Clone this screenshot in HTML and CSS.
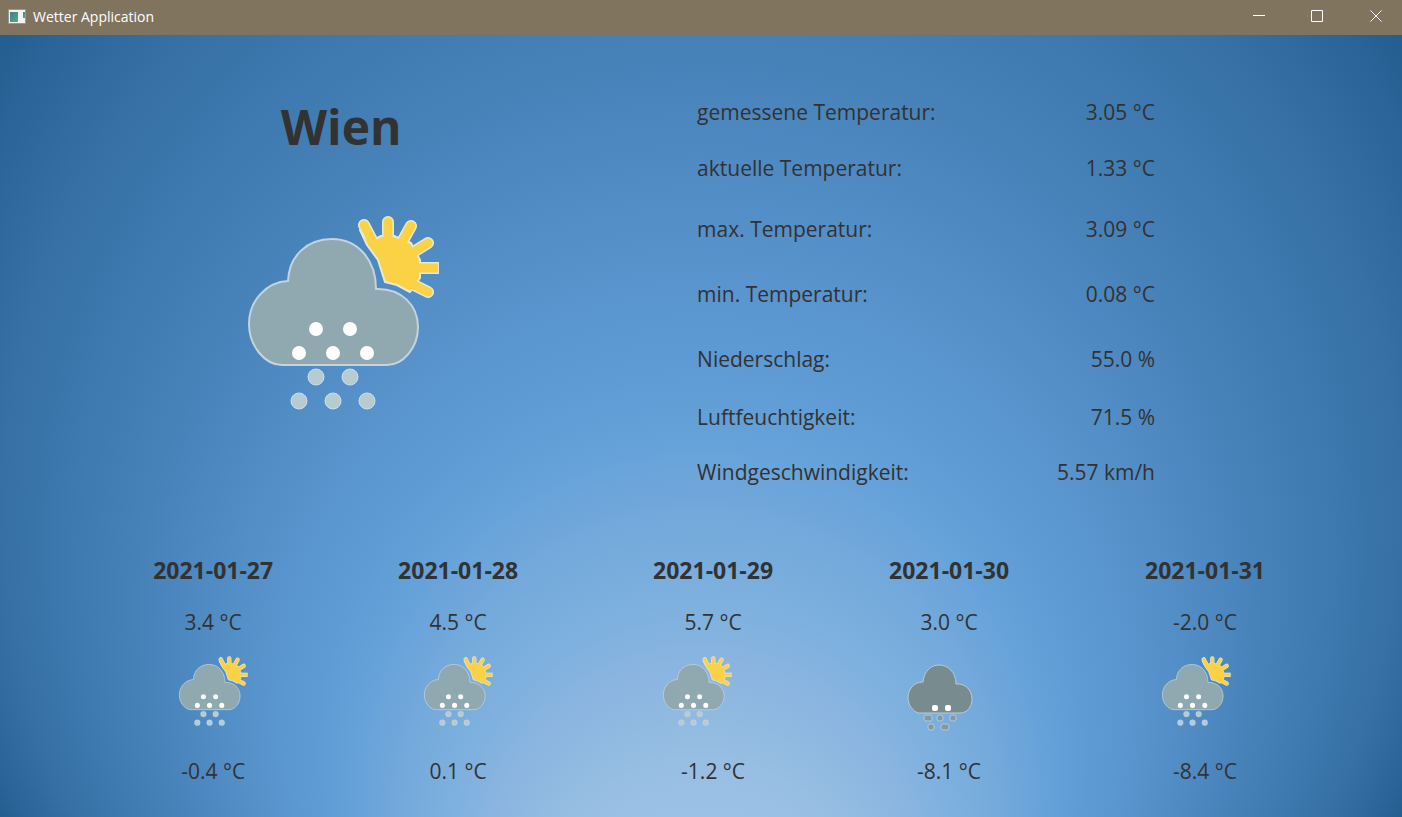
FILE: index.html
```html
<!DOCTYPE html>
<html lang="de">
<head>
<meta charset="utf-8">
<title>Wetter Application</title>
<link rel="stylesheet" href="styles.css">
</head>
<body>
<svg class="symbols" aria-hidden="true">
  <defs>
    <symbol id="snow-sun" viewBox="0 0 192 194">
      <g stroke-linecap="round" stroke-linejoin="round">
        <path d="M116 9L126 28M140 6V30M163 10L153 28M180 27L159 40M180 76L156 64" fill="none" stroke="#e6ebd6" stroke-width="12"/>
        <path d="M160 52H191" fill="none" stroke="#e6ebd6" stroke-width="12" stroke-linecap="butt"/>
        <path d="M112 14L119 29L130 44L137 66L149 69L162 76L172 62V44L163 27L146 20H133L122 26Z" fill="#fbd145" stroke="#e6ebd6" stroke-width="2"/>
        <path d="M116 9L126 28M140 6V30M163 10L153 28M180 27L159 40M180 76L156 64" fill="none" stroke="#fbd145" stroke-width="9"/>
        <path d="M160 52H190" fill="none" stroke="#fbd145" stroke-width="9" stroke-linecap="butt"/>
      </g>
      <path d="M34 149C17 149 1 130 1 108C1 84 19 66 40 65C41 40 59 23 84 23C109 23 128 43 128 73C153 72 170 89 170 111C170 132 155 149 139 149Z" fill="#90a9b1" stroke="#c4d4de" stroke-width="2"/>
      <g fill="#fff"><circle cx="68" cy="113" r="7"/><circle cx="102" cy="113" r="7"/><circle cx="51" cy="137" r="7"/><circle cx="85" cy="137" r="7"/><circle cx="119" cy="137" r="7"/></g>
      <g fill="#b7cbd3" stroke="#cfdee8" stroke-width="1"><circle cx="68" cy="161" r="8"/><circle cx="102" cy="161" r="8"/><circle cx="51" cy="185" r="8"/><circle cx="85" cy="185" r="8"/><circle cx="119" cy="185" r="8"/></g>
    </symbol>
    <symbol id="snow" viewBox="0 0 66 67">
      <path d="M11 49C6 47 1 41 1 34C1 25 7 18 16 18C17 7 24 1 32 1C41 1 49 8 49 20C58 19 65 26 65 35C65 43 60 49 53 49Z" fill="#788b8f" stroke="#bccbd2"/>
      <g fill="#fff"><rect x="25" y="41" width="6" height="6" rx="2"/><rect x="38" y="41" width="6" height="6" rx="2"/></g>
      <g fill="#8299a1" stroke="#b4c9d8"><rect x="17" y="51" width="8" height="6" rx="2"/><rect x="30" y="51" width="6" height="6" rx="2"/><rect x="43" y="51" width="6" height="6" rx="2"/><rect x="21" y="60" width="6" height="6" rx="2"/><rect x="34" y="60" width="8" height="6" rx="2"/></g>
    </symbol>
  </defs>
</svg>

<header class="titlebar">
  <svg class="app-icon" viewBox="0 0 18 15" aria-hidden="true">
    <defs><linearGradient id="pane" x2="1" y2="1"><stop stop-color="#3f7f9b"/><stop offset="1" stop-color="#59a878"/></linearGradient></defs>
    <rect width="18" height="15" fill="#9b968b"/><rect x="1" y="1" width="16" height="13" fill="#f2f2f2"/>
    <rect x="2" y="3" width="8" height="10" fill="url(#pane)"/><rect x="15" y="3" width="2" height="6" fill="url(#pane)"/>
  </svg>
  <h1 class="title">Wetter Application</h1>
  <div class="controls">
    <button class="control" type="button" aria-label="Minimieren"><svg viewBox="0 0 12 12"><path d="M0 5.5H12"/></svg></button>
    <button class="control" type="button" aria-label="Maximieren"><svg viewBox="0 0 12 12"><path d="M.5.5H11.5V11.5H.5Z"/></svg></button>
    <button class="control close" type="button" aria-label="Schließen"><svg viewBox="0 0 12 12"><path d="M.5.5L11.5 11.5M11.5.5L.5 11.5"/></svg></button>
  </div>
</header>

<main class="weather">
  <svg class="sky" viewBox="0 0 1402 782" preserveAspectRatio="none" aria-hidden="true">
    <defs>
      <radialGradient id="sky" gradientUnits="userSpaceOnUse" cx="701" cy="391" r="803" fx="701" fy="1019">
        <stop offset=".16" stop-color="#9dc1e6"/>
        <stop offset=".2" stop-color="#98bfe3"/>
        <stop offset=".27" stop-color="#8ab5e0"/>
        <stop offset=".32" stop-color="#7db0de"/>
        <stop offset=".38" stop-color="#72a8db"/>
        <stop offset=".43" stop-color="#65a2d9"/>
        <stop offset=".48" stop-color="#5e9bd4"/>
        <stop offset=".55" stop-color="#5893cc"/>
        <stop offset=".7" stop-color="#4682b8"/>
        <stop offset=".79" stop-color="#3d79ae"/>
        <stop offset=".87" stop-color="#3670a5"/>
        <stop offset=".94" stop-color="#2d669b"/>
        <stop offset="1" stop-color="#235e90"/>
      </radialGradient>
    </defs>
    <rect width="1402" height="782" fill="url(#sky)"/>
  </svg>

  <section class="current">
    <div class="place">
      <h2 class="city">Wien</h2>
      <svg class="condition" role="img" aria-label="Schneeschauer"><use href="#snow-sun"/></svg>
    </div>
    <dl class="readings">
      <div><dt>gemessene Temperatur:</dt><dd>3.05 °C</dd></div>
      <div><dt>aktuelle Temperatur:</dt><dd>1.33 °C</dd></div>
      <div><dt>max. Temperatur:</dt><dd>3.09 °C</dd></div>
      <div><dt>min. Temperatur:</dt><dd>0.08 °C</dd></div>
      <div><dt>Niederschlag:</dt><dd>55.0 %</dd></div>
      <div><dt>Luftfeuchtigkeit:</dt><dd>71.5 %</dd></div>
      <div><dt>Windgeschwindigkeit:</dt><dd>5.57 km/h</dd></div>
    </dl>
  </section>

  <section class="forecast">
    <article class="day"><h3>2021-01-27</h3><p>3.4 °C</p><svg class="day-icon" role="img" aria-label="Schneeschauer"><use href="#snow-sun"/></svg><p>-0.4 °C</p></article>
    <article class="day"><h3>2021-01-28</h3><p>4.5 °C</p><svg class="day-icon" role="img" aria-label="Schneeschauer"><use href="#snow-sun"/></svg><p>0.1 °C</p></article>
    <article class="day"><h3>2021-01-29</h3><p>5.7 °C</p><svg class="day-icon shifted-far" role="img" aria-label="Schneeschauer"><use href="#snow-sun"/></svg><p>-1.2 °C</p></article>
    <article class="day"><h3>2021-01-30</h3><p>3.0 °C</p><svg class="day-icon snow shifted" role="img" aria-label="Schnee"><use href="#snow"/></svg><p>-8.1 °C</p></article>
    <article class="day"><h3>2021-01-31</h3><p>-2.0 °C</p><svg class="day-icon shifted" role="img" aria-label="Schneeschauer"><use href="#snow-sun"/></svg><p>-8.4 °C</p></article>
  </section>
</main>
</body>
</html>
```
FILE: styles.css
```css
* { box-sizing: border-box; }

body {
  margin: 0;
  min-height: 100vh;
  display: flex;
  flex-direction: column;
  color: #323232;
  font-family: "Segoe UI", "Open Sans", "Noto Sans", sans-serif;
  font-size: 21px;
  line-height: 30px;
}

h1, h2, h3, p, dl, dd { margin: 0; }

.symbols { position: absolute; width: 0; height: 0; }

.titlebar {
  display: flex;
  align-items: center;
  height: 35px;
  padding-left: 8px;
  background: #80745f;
  color: #fff;
}

.app-icon { width: 18px; height: 15px; margin-bottom: 3px; }

.title {
  margin: 0 0 2px 7px;
  font-size: 14px;
  line-height: 20px;
  font-weight: 400;
}

.controls { display: flex; margin-left: auto; }

.control {
  display: grid;
  place-items: center;
  width: 58px;
  height: 35px;
  padding: 0 0 3px;
  border: 0;
  background: none;
}

.control svg { width: 12px; height: 12px; fill: none; stroke: #fff; }
.control.close { width: 56px; padding-left: 4px; }

.weather {
  position: relative;
  flex: 1;
  padding: 62px 80px 16px 9%;
}

.sky {
  position: absolute;
  inset: 0;
  width: 100%;
  height: 100%;
}

.current, .forecast { position: relative; }

.current {
  display: grid;
  grid-template-columns: 430fr 458fr;
  column-gap: 141px;
  padding-right: 167px;
}

.place {
  display: flex;
  flex-direction: column;
  align-items: center;
}

.city { font-size: 48px; line-height: 60px; font-weight: 700; }
.condition { width: 192px; height: 194px; margin: 59px 0 0 6px; }

.readings > div { display: flex; justify-content: space-between; height: 56px; }
.readings > div:nth-child(2) { height: 61px; }
.readings > div:nth-child(3), .readings > div:nth-child(4) { height: 65px; }
.readings > div:nth-child(5) { height: 58px; }
.readings > div:nth-child(6) { height: 55px; }
.readings > div:last-child { height: 30px; }

.forecast {
  display: grid;
  grid-template-columns: 174fr 316fr 194fr 278fr 234fr;
  margin-top: 68px;
}

.day { display: flex; flex-direction: column; align-items: center; }
.day h3 { margin-bottom: 22px; font-size: 23px; line-height: 30px; font-weight: 700; }
.day-icon { width: 69px; height: 70px; margin: 19px 0 30px; }
.day-icon.snow { width: 66px; height: 67px; margin: 27px 0 25px; }
.day-icon.shifted { margin-right: 18px; }
.day-icon.shifted-far { margin-right: 32px; }
```
